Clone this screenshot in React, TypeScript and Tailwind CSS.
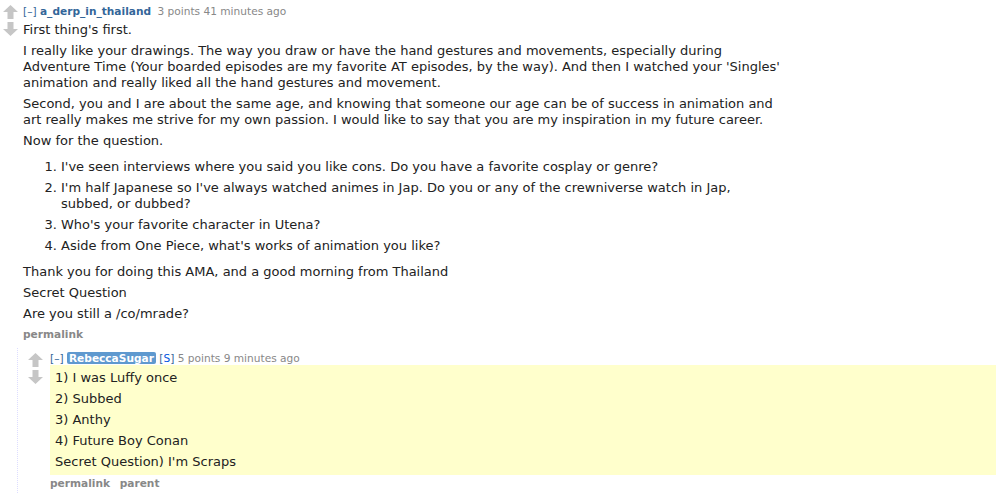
import React from "react";

function Arrow({ down }: { down?: boolean }) {
  return (
    <svg width="15" height="14" viewBox="0 0 15 14" className={down ? "rotate-180" : ""}>
      <path d="M7.5 0 L15 7 L10.5 7 L10.5 14 L4.5 14 L4.5 7 L0 7 Z" fill="#c6c6c6" />
    </svg>
  );
}

function Votes() {
  return (
    <div className="flex flex-col items-center gap-[3px] w-[15px] pt-[5px] shrink-0">
      <Arrow />
      <Arrow down />
    </div>
  );
}

const P = ({ children }: { children: React.ReactNode }) => (
  <p className="my-[5px] whitespace-nowrap">{children}</p>
);

export default function App() {
  return (
    <div
      className="bg-white min-h-[494px] text-[13px] leading-[16px] text-[#222]"
      style={{ fontFamily: "Verdana, 'DejaVu Sans', sans-serif" }}
    >
      <div className="flex pl-[3px] gap-[5px]">
        <Votes />
        <div className="flex-1 pr-[8px]">
          <div className="text-[10.6px] leading-[12px] pt-[5px] text-[#888]">
            <span className="text-[#369]">[–]</span>{" "}
            <span className="font-bold text-[#369]">a_derp_in_thailand</span>{" "}
            <span className="ml-[3px]">3 points 41 minutes ago</span>
          </div>
          <div>
            <P>First thing's first.</P>
            <P>
              I really like your drawings. The way you draw or have the hand gestures and movements, especially during
              <br />
              Adventure Time (Your boarded episodes are my favorite AT episodes, by the way). And then I watched your 'Singles'
              <br />
              animation and really liked all the hand gestures and movement.
            </P>
            <P>
              Second, you and I are about the same age, and knowing that someone our age can be of success in animation and
              <br />
              art really makes me strive for my own passion. I would like to say that you are my inspiration in my future career.
            </P>
            <P>Now for the question.</P>
            <ol className="list-decimal pl-[38px] my-[10px] whitespace-nowrap">
              <li className="my-[5px]">I've seen interviews where you said you like cons. Do you have a favorite cosplay or genre?</li>
              <li className="my-[5px]">
                I'm half Japanese so I've always watched animes in Jap. Do you or any of the crewniverse watch in Jap,
                <br />
                subbed, or dubbed?
              </li>
              <li className="my-[5px]">Who's your favorite character in Utena?</li>
              <li className="my-[5px]">Aside from One Piece, what's works of animation you like?</li>
            </ol>
            <P>Thank you for doing this AMA, and a good morning from Thailand</P>
            <P>Secret Question</P>
            <P>Are you still a /co/mrade?</P>
          </div>
          <div className="text-[10.6px] leading-[12px] font-bold text-[#888] mt-[6px]">permalink</div>

          <div className="flex mt-[8px] -ml-[6px] border-l border-dotted border-[#ddf] pl-[10px] gap-[7px] pb-[8px]">
            <Votes />
            <div className="flex-1">
              <div className="text-[10.6px] leading-[10px] pt-[5px] text-[#888]">
                <span className="text-[#369]">[–]</span>{" "}
                <span className="font-bold text-white bg-[#5f99cf] px-[2px] rounded-[2px]">RebeccaSugar</span>{" "}
                <span className="text-[#369]">[<span className="text-[#0055df]">S</span>]</span>{" "}
                <span>5 points 9 minutes ago</span>
              </div>
              <div className="flow-root bg-[#ffffcc] px-[5px] mt-[2px]">
                <P>1) I was Luffy once</P>
                <P>2) Subbed</P>
                <P>3) Anthy</P>
                <P>4) Future Boy Conan</P>
                <P>Secret Question) I'm Scraps</P>
              </div>
              <div className="text-[10.6px] leading-[12px] font-bold text-[#888] mt-[2px]">
                permalink <span className="ml-[6px]">parent</span>
              </div>
            </div>
          </div>
        </div>
      </div>
    </div>
  );
}
